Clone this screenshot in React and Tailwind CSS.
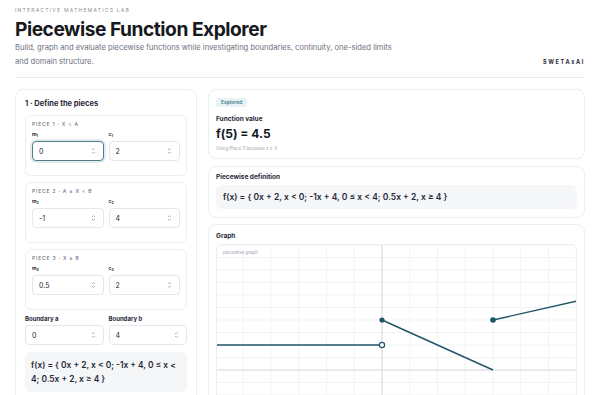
import React from "react";

const FORMULA = "f(x) = { 0x + 2, x < 0; -1x + 4, 0 ≤ x < 4; 0.5x + 2, x ≥ 4 }";

// tiny up/down stepper drawn next to number values
function Stepper() {
  return (
    <svg width="5" height="8" viewBox="0 0 5 8" className="shrink-0">
      <path d="M1 3 L2.5 1.5 L4 3" fill="none" stroke="#9ca3af" strokeWidth="0.8" />
      <path d="M1 5 L2.5 6.5 L4 5" fill="none" stroke="#9ca3af" strokeWidth="0.8" />
    </svg>
  );
}

function NumberBox({ value, focused }) {
  return (
    <div
      className={
        focused
          ? "h-[20px] rounded-[4px] border border-[#4f7d8c] ring-2 ring-[#4f7d8c]/15 bg-white flex items-center justify-between pl-[6px] pr-[7px]"
          : "h-[20px] rounded-[4px] border border-[#e3e6ea] bg-white flex items-center justify-between pl-[6px] pr-[7px]"
      }
    >
      <span className="text-[7px] leading-none text-[#1f2937]">{value}</span>
      <Stepper />
    </div>
  );
}

function Field({ label, sub, value, focused }) {
  return (
    <div className="flex flex-col">
      <div className="text-[5px] leading-[7px] font-bold text-[#1f2937] mb-[3px]">
        {label}
        <sub className="text-[3.5px]">{sub}</sub>
      </div>
      <NumberBox value={value} focused={focused} />
    </div>
  );
}

function PieceCard({ title, n, m, c, focused }) {
  return (
    <div className="rounded-[6px] border border-[#eceef1] px-[6px] pt-[4px] pb-[14px]">
      <div className="text-[5px] leading-[8px] tracking-[0.16em] uppercase text-[#6b7280] font-medium mb-[3px]">
        {title}
      </div>
      <div className="grid grid-cols-2 gap-[5px]">
        <Field label="m" sub={n} value={m} focused={focused} />
        <Field label="c" sub={n} value={c} />
      </div>
    </div>
  );
}

function Graph() {
  const ox = 165;
  const oy = 125;
  const ux = 27.75;
  const uy = 12.5;
  const px = (x) => ox + x * ux;
  const py = (y) => oy - y * uy;
  const vlines = [];
  for (let k = -6; k <= 7; k++) vlines.push(px(k));
  const hlines = [];
  for (let k = -3; k <= 10; k++) hlines.push(py(k));
  const col = "#1f5667";
  return (
    <div className="relative rounded-[6px] border border-[#eceef1] overflow-hidden">
      <svg width="359" height="170" viewBox="0 0 359 170" className="block">
        {vlines.map((x) => (
          <line key={"v" + x} x1={x} y1="0" x2={x} y2="170" stroke="#f1f3f5" strokeWidth="1" />
        ))}
        {hlines.map((y) => (
          <line key={"h" + y} x1="0" y1={y} x2="359" y2={y} stroke="#f1f3f5" strokeWidth="1" />
        ))}
        <line x1={ox} y1="0" x2={ox} y2="170" stroke="#d8dce0" strokeWidth="1" />
        <line x1="0" y1={oy} x2="359" y2={oy} stroke="#d8dce0" strokeWidth="1.2" />
        <line x1={px(-6)} y1={py(2)} x2={px(0)} y2={py(2)} stroke={col} strokeWidth="1.4" />
        <line x1={px(0)} y1={py(4)} x2={px(4)} y2={py(0)} stroke={col} strokeWidth="1.4" />
        <line x1={px(4)} y1={py(4)} x2={px(7)} y2={py(5.5)} stroke={col} strokeWidth="1.4" />
        <circle cx={px(0)} cy={py(2)} r="2.6" fill="#ffffff" stroke={col} strokeWidth="1.2" />
        <circle cx={px(0)} cy={py(4)} r="2.6" fill={col} />
        <circle cx={px(4)} cy={py(4)} r="2.8" fill={col} />
      </svg>
      <div className="absolute left-[6px] top-[5px] text-[4.5px] leading-[6px] text-[#9ca3af]">
        piecewise graph
      </div>
    </div>
  );
}

export default function App() {
  return (
    <div className="min-h-screen bg-white font-['Inter',sans-serif] text-[#111827] px-[15px] pt-[6px] pb-[40px]">
      {/* header */}
      <header className="border-b border-[#e8eaed] pb-[8px]">
        <div className="text-[5px] leading-[8px] tracking-[0.25em] uppercase text-[#8b9098]">
          Interactive Mathematics Lab
        </div>
        <h1 className="mt-[3px] text-[19.2px] leading-[24px] font-bold tracking-tight text-[#16191d]">
          Piecewise Function Explorer
        </h1>
        <div className="flex items-end justify-between">
          <p className="text-[7.6px] leading-[14px] text-[#6b7280]">
            Build, graph and evaluate piecewise functions while investigating boundaries, continuity, one-sided limits
            <br />
            and domain structure.
          </p>
          <div className="text-[5.5px] font-bold tracking-[0.3em] text-[#1f2937] mb-[3px]">SWETAxAI</div>
        </div>
      </header>

      <main className="mt-[11px] grid grid-cols-[182px_1fr] gap-[11px] items-start">
        {/* left column */}
        <section className="rounded-[8px] border border-[#eceef1] px-[9px] pt-[8px] pb-[12px]">
          <h2 className="text-[7.5px] leading-[12px] font-bold text-[#1f2937] mb-[5px]">1 · Define the pieces</h2>
          <div className="flex flex-col gap-[6px]">
            <PieceCard title="Piece 1 · x < a" n="1" m="0" c="2" focused />
            <PieceCard title="Piece 2 · a ≤ x < b" n="2" m="-1" c="4" />
            <PieceCard title="Piece 3 · x ≥ b" n="3" m="0.5" c="2" />
          </div>
          <div className="mt-[5px] grid grid-cols-2 gap-[5px]">
            <div className="flex flex-col">
              <div className="text-[6px] leading-[8px] font-bold text-[#1f2937] mb-[2px]">Boundary a</div>
              <NumberBox value="0" />
            </div>
            <div className="flex flex-col">
              <div className="text-[6px] leading-[8px] font-bold text-[#1f2937] mb-[2px]">Boundary b</div>
              <NumberBox value="4" />
            </div>
          </div>
          <div className="mt-[7px] rounded-[6px] bg-[#f4f6f8] px-[6px] py-[6px] text-[8.4px] leading-[14px] font-semibold text-[#1f2937]">
            {FORMULA}
          </div>
        </section>

        {/* right column */}
        <div className="flex flex-col">
          <section className="rounded-[8px] border border-[#eceef1] px-[7px] pt-[8px] pb-[5px]">
            <div className="w-fit h-[9px] rounded-[3px] bg-[#e7f3f5] px-[5px] text-[5px] leading-[9px] font-semibold text-[#3f7b8a]">
              Explored
            </div>
            <div className="mt-[7px] text-[6.5px] leading-[10px] font-bold text-[#1f2937]">Function value</div>
            <div className="mt-[3px] text-[12px] leading-[14px] font-bold text-[#16191d]">f(5) = 4.5</div>
            <div className="mt-[4px] text-[4.5px] leading-[8px] text-[#9ca3af]">Using Piece 3 because x ≥ 4.</div>
          </section>

          <section className="mt-[7px] rounded-[8px] border border-[#eceef1] px-[7px] pt-[5px] pb-[8px]">
            <div className="text-[6.5px] leading-[10px] font-bold text-[#1f2937]">Piecewise definition</div>
            <div className="mt-[3px] h-[24px] rounded-[6px] bg-[#f4f6f8] px-[7px] flex items-center text-[8.5px] font-semibold text-[#1f2937]">
              {FORMULA}
            </div>
          </section>

          <section className="mt-[6px] rounded-[8px] border border-[#eceef1] px-[7px] pt-[6px] pb-[8px]">
            <div className="text-[6.5px] leading-[10px] font-bold text-[#1f2937] mb-[3px]">Graph</div>
            <Graph />
          </section>
        </div>
      </main>
    </div>
  );
}
